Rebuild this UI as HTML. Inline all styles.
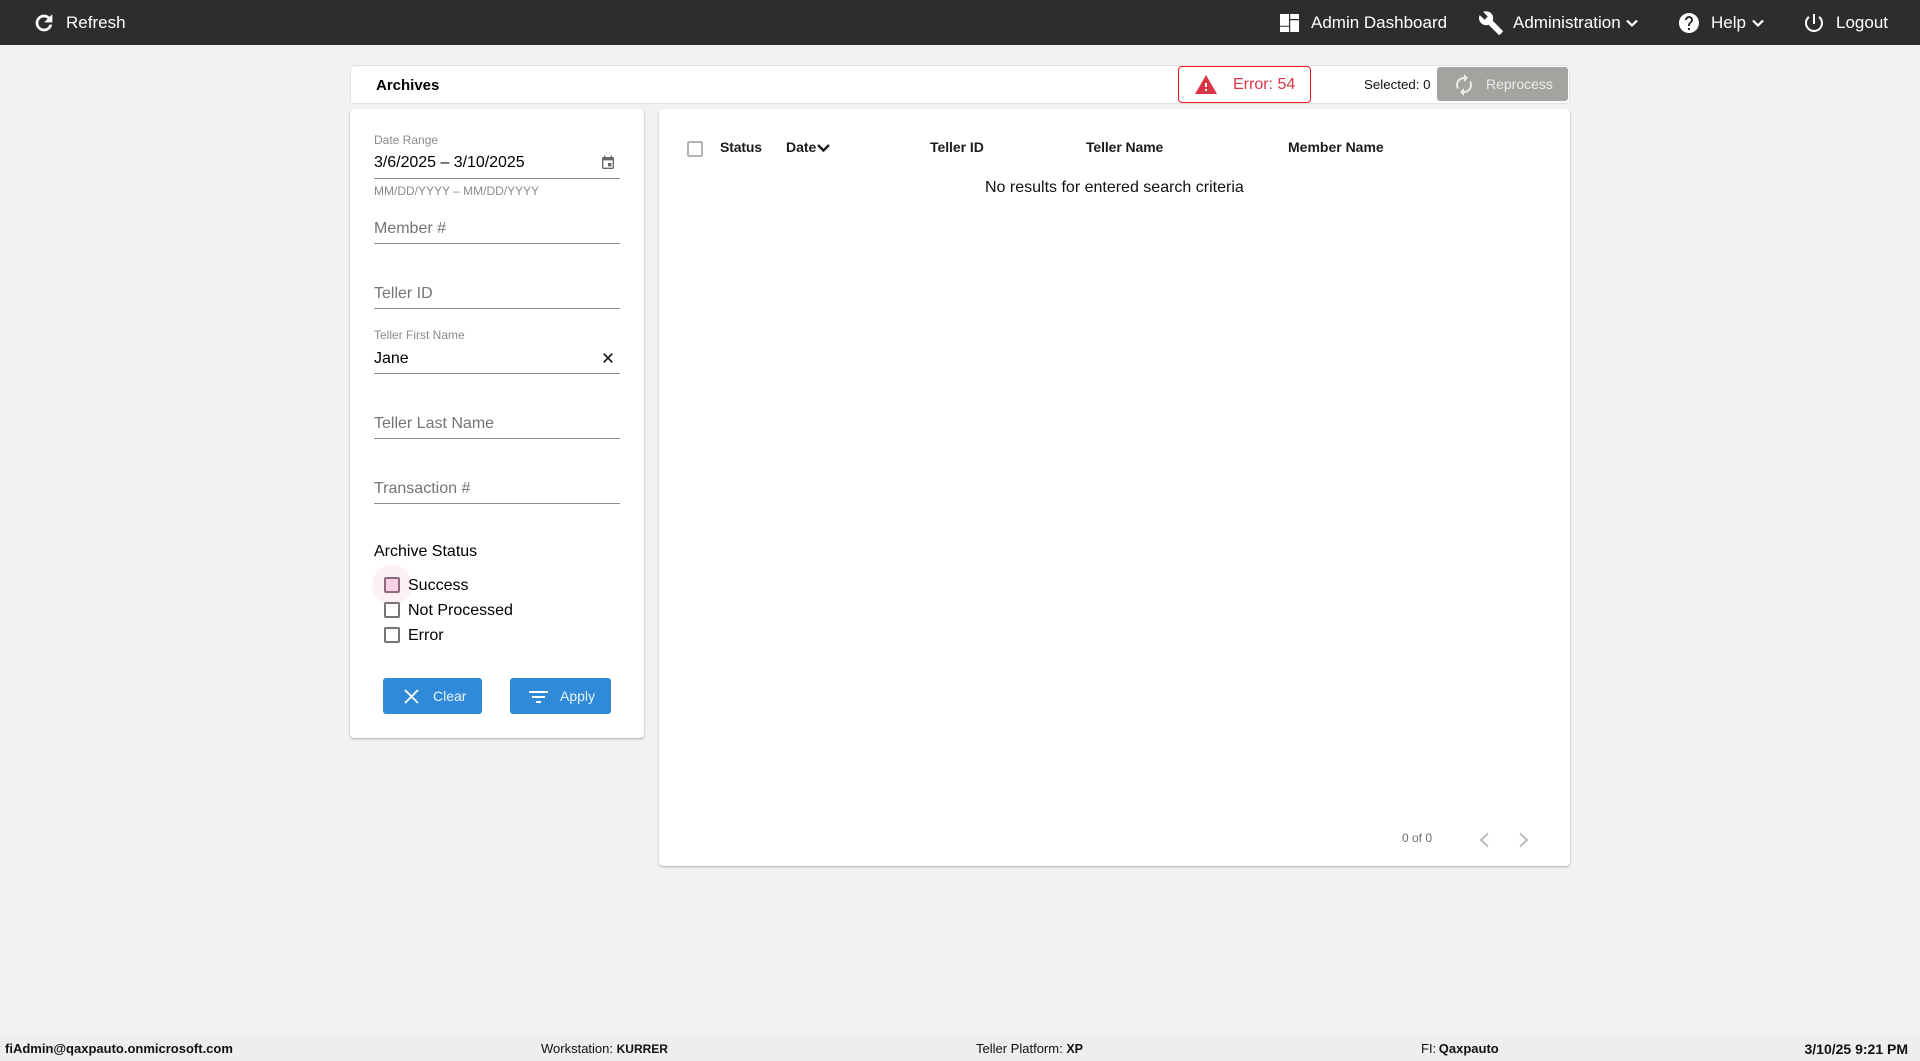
<!DOCTYPE html>
<html lang="en"><head><meta charset="utf-8"><title>Archives</title>
<style>
html,body{margin:0;padding:0}
body{position:relative;width:1920px;height:1061px;overflow:hidden;background:#f2f2f2;font-family:"Liberation Sans",Arial,sans-serif;color:#000}
.a{position:absolute}
.t{position:absolute;white-space:nowrap;line-height:20px;font-size:16px}
.w{color:#fff;font-size:17px}
.g{color:#757575}
.l{color:#8a8a8a;font-size:12px}
.u{position:absolute;left:374px;width:246px;height:1px;background:#8c8c8c}
.b{font-weight:bold;font-size:14px;color:#1c1c1c}
.cb{position:absolute;left:384px;width:12px;height:12px;border:2px solid #757575;border-radius:2px;background:#fff}
.f{font-size:13px;color:#111}
.f b{font-size:12.5px}
svg{position:absolute;display:block}
</style></head><body>
<div class="a" style="left:0;top:0;width:1920px;height:45px;background:#2d2d2d"></div>

<svg style="left:32px;top:11px" width="24" height="24" viewBox="0 0 24 24" fill="#fff" stroke="#fff" stroke-width=".7"><path d="M17.65 6.35C16.2 4.9 14.21 4 12 4c-4.42 0-7.99 3.58-7.99 8s3.57 8 7.99 8c3.73 0 6.84-2.55 7.73-6h-2.08c-.82 2.33-3.04 4-5.65 4-3.31 0-6-2.69-6-6s2.69-6 6-6c1.66 0 3.14.69 4.22 1.78L13 11h7V4l-2.35 2.35z"/></svg>
<div class="t w" style="left:66px;top:13px">Refresh</div>

<svg style="left:1280px;top:14px" width="19" height="18" viewBox="0 0 19 18" fill="#fff"><path d="M0 0h9v11.700H0zM0 12.700h9V18H0zM10.200 0H19v5h-8.800zM10.200 6.300H19V18h-8.800z"/></svg>
<div class="t w" style="left:1311px;top:13px">Admin Dashboard</div>
<svg style="left:1478px;top:10px" width="26" height="26" viewBox="0 0 24 24" fill="#fff"><path d="M22.7 19l-9.1-9.1c.9-2.3.4-5-1.5-6.9-2-2-5-2.4-7.400-1.300L9 6 6 9 1.600 4.700C.4 7.100.9 10.100 2.900 12.100c1.900 1.900 4.600 2.400 6.900 1.500l9.100 9.100c.4.4 1 .4 1.400 0l2.300-2.300c.5-.4.5-1.100.1-1.400z"/></svg>
<div class="t w" style="left:1513px;top:13px">Administration</div>
<svg style="left:1626px;top:17px" width="12" height="12" viewBox="0 0 12 12" fill="none" stroke="#fff" stroke-width="2.200"><path d="M1 3.500l5 5 5-5"/></svg>
<svg style="left:1677px;top:11px" width="24" height="24" viewBox="0 0 24 24" fill="#fff"><path d="M12 2C6.48 2 2 6.48 2 12s4.48 10 10 10 10-4.48 10-10S17.52 2 12 2zm1 17h-2v-2h2v2zm2.07-7.75l-.9.92C13.45 12.9 13 13.5 13 15h-2v-.5c0-1.1.45-2.1 1.17-2.83l1.24-1.26c.37-.36.59-.86.59-1.41 0-1.1-.9-2-2-2s-2 .9-2 2H8c0-2.21 1.79-4 4-4s4 1.79 4 4c0 .88-.36 1.68-.93 2.25z"/></svg>
<div class="t w" style="left:1711px;top:13px">Help</div>
<svg style="left:1752px;top:17px" width="12" height="12" viewBox="0 0 12 12" fill="none" stroke="#fff" stroke-width="2.200"><path d="M1 3.500l5 5 5-5"/></svg>
<svg style="left:1802px;top:11px" width="24" height="24" viewBox="0 0 24 24" fill="#fff"><path d="M13 3h-2v10h2V3zm4.83 2.17l-1.42 1.42C17.99 7.86 19 9.81 19 12c0 3.87-3.13 7-7 7s-7-3.13-7-7c0-2.19 1.01-4.14 2.58-5.42L6.17 5.17C4.23 6.82 3 9.26 3 12c0 4.97 4.03 9 9 9s9-4.03 9-9c0-2.74-1.23-5.18-3.17-6.83z"/></svg>
<div class="t w" style="left:1836px;top:13px">Logout</div>

<div class="a" style="left:350px;top:65px;width:1220px;height:39px;background:#fff;border:1px solid #e2e2e2;box-sizing:border-box;border-radius:4px"></div>
<div class="t" style="left:376px;top:76px;font-size:15px;font-weight:bold">Archives</div>
<div class="a" style="left:1178px;top:66px;width:133px;height:37px;box-sizing:border-box;border:1px solid #f0141e;border-radius:4px;background:#fff"></div>
<svg style="left:1194px;top:73px" width="24" height="24" viewBox="0 0 24 24" fill="#dc3545"><path d="M1 21h22L12 2 1 21zm12-3h-2v-2h2v2zm0-4h-2v-4h2v4z"/></svg>
<div class="t" style="left:1233px;top:75px;color:#dc3545">Error: 54</div>
<div class="t" style="left:1364px;top:75px;font-size:13.300px;color:#111">Selected: 0</div>
<div class="a" style="left:1437px;top:67px;width:131px;height:34px;background:#a5a3a0;border-radius:3px"></div>
<svg style="left:1452px;top:73px" width="24" height="24" viewBox="0 0 24 24" fill="#ececec"><path d="M12 6v3l4-4-4-4v3c-4.42 0-8 3.58-8 8 0 1.57.46 3.03 1.24 4.26L6.7 14.8c-.45-.83-.7-1.79-.7-2.8 0-3.31 2.69-6 6-6zm6.76 1.74L17.3 9.2c.44.84.7 1.79.7 2.8 0 3.31-2.69 6-6 6v-3l-4 4 4 4v-3c4.42 0 8-3.58 8-8 0-1.57-.46-3.03-1.24-4.26z"/></svg>
<div class="t" style="left:1486px;top:74px;font-size:14px;color:#ececec">Reprocess</div>

<div class="a" style="left:350px;top:109px;width:294px;height:629px;background:#fff;border-radius:4px;box-shadow:0 1px 2px rgba(0,0,0,.3)"></div>
<div class="t l" style="left:374px;top:130px">Date Range</div>
<div class="t" style="left:374px;top:152.500px;letter-spacing:-.03px">3/6/2025 – 3/10/2025</div>
<svg style="left:600px;top:155px" width="16" height="16" viewBox="0 0 24 24" fill="#666"><path d="M17 12h-5v5h5v-5zM16 1v2H8V1H6v2H5c-1.11 0-1.99.9-1.99 2L3 19c0 1.1.89 2 2 2h14c1.1 0 2-.9 2-2V5c0-1.1-.9-2-2-2h-1V1h-2zm3 18H5V8h14v11z"/></svg>
<div class="u" style="top:178px"></div>
<div class="t l" style="left:374px;top:181px">MM/DD/YYYY – MM/DD/YYYY</div>
<div class="t g" style="left:374px;top:219px">Member #</div>
<div class="u" style="top:243px"></div>
<div class="t g" style="left:374px;top:284px">Teller ID</div>
<div class="u" style="top:308px"></div>
<div class="t l" style="left:374px;top:325px">Teller First Name</div>
<div class="t" style="left:374px;top:349px">Jane</div>
<svg style="left:603px;top:353px" width="10" height="10" viewBox="0 0 10 10" stroke="#111" stroke-width="1.600"><path d="M.7.7l8.600 8.600M9.300.7L.7 9.300"/></svg>
<div class="u" style="top:373px"></div>
<div class="t g" style="left:374px;top:414px">Teller Last Name</div>
<div class="u" style="top:438px"></div>
<div class="t g" style="left:374px;top:479px">Transaction #</div>
<div class="u" style="top:503px"></div>
<div class="t" style="left:374px;top:540px;margin-top:2px">Archive Status</div>

<div class="a" style="left:372px;top:565px;width:40px;height:40px;border-radius:50%;background:#fef1f6"></div>
<div class="cb" style="top:577px;background:#f8d0e2;border-color:#8e6a7c"></div>
<div class="t" style="left:408px;top:576px">Success</div>
<div class="cb" style="top:602px"></div>
<div class="t" style="left:408px;top:601px">Not Processed</div>
<div class="cb" style="top:627px"></div>
<div class="t" style="left:408px;top:626px">Error</div>

<div class="a" style="left:383px;top:678px;width:99px;height:36px;background:#2f8ad9;border-radius:3px"></div>
<svg style="left:404px;top:689px" width="15" height="15" viewBox="0 0 15 15" stroke="#fff" stroke-width="1.800"><path d="M1 1l13 13M14 1L1 14"/></svg>
<div class="t" style="left:433px;top:686px;font-size:14px;color:#eaf3fb">Clear</div>
<div class="a" style="left:510px;top:678px;width:101px;height:36px;background:#2f8ad9;border-radius:3px"></div>
<svg style="left:529px;top:690px" width="19" height="14" viewBox="0 0 19 14" fill="#fff"><path d="M0 1h19v2H0zM3 6h13v2H3zM7 11h5v2H7z"/></svg>
<div class="t" style="left:560px;top:686px;font-size:14px;color:#eaf3fb">Apply</div>

<div class="a" style="left:659px;top:109px;width:911px;height:757px;background:#fff;border-radius:4px;box-shadow:0 1px 2px rgba(0,0,0,.3)"></div>
<div class="a" style="left:687px;top:141px;width:12px;height:12px;border:2px solid #b3b3b3;border-radius:2px"></div>
<div class="t b" style="left:720px;top:137px;letter-spacing:-.15px">Status</div>
<div class="t b" style="left:786px;top:137px">Date</div>
<svg style="left:817px;top:142px" width="13" height="12" viewBox="0 0 13 12" fill="none" stroke="#1c1c1c" stroke-width="2.400"><path d="M1 3l5.500 5.500L12 3"/></svg>
<div class="t b" style="left:930px;top:137px;letter-spacing:-.05px">Teller ID</div>
<div class="t b" style="left:1086px;top:137px;letter-spacing:-.1px">Teller Name</div>
<div class="t b" style="left:1288px;top:137px">Member Name</div>
<div class="t" style="left:985px;top:178px;color:#111">No results for entered search criteria</div>
<div class="t" style="left:1402px;top:828px;font-size:12px;color:#6f6f6f">0 of 0</div>
<svg style="left:1477px;top:832px" width="14" height="16" viewBox="0 0 14 16" fill="none" stroke="#bdbdbd" stroke-width="2"><path d="M11 1.500L4 8l7 6.500"/></svg>
<svg style="left:1517px;top:832px" width="14" height="16" viewBox="0 0 14 16" fill="none" stroke="#bdbdbd" stroke-width="2"><path d="M3 1.500L10 8l-7 6.500"/></svg>

<div class="a" style="left:0;top:1035px;width:1920px;height:26px;background:#eceef0"></div>
<div class="t f" style="left:5px;top:1039px"><b style="font-size:13px">fiAdmin@qaxpauto.onmicrosoft.com</b></div>
<div class="t f" style="left:541px;top:1039px">Workstation: <b style="font-size:12px">KURRER</b></div>
<div class="t f" style="left:976px;top:1039px">Teller Platform: <b>XP</b></div>
<div class="t f" style="left:1421px;top:1039px">FI: <b style="margin-left:-1px;font-size:13px">Qaxpauto</b></div>
<div class="t f" style="right:12px;top:1038.500px"><b style="font-size:14px">3/10/25 9:21 PM</b></div>
</body></html>
